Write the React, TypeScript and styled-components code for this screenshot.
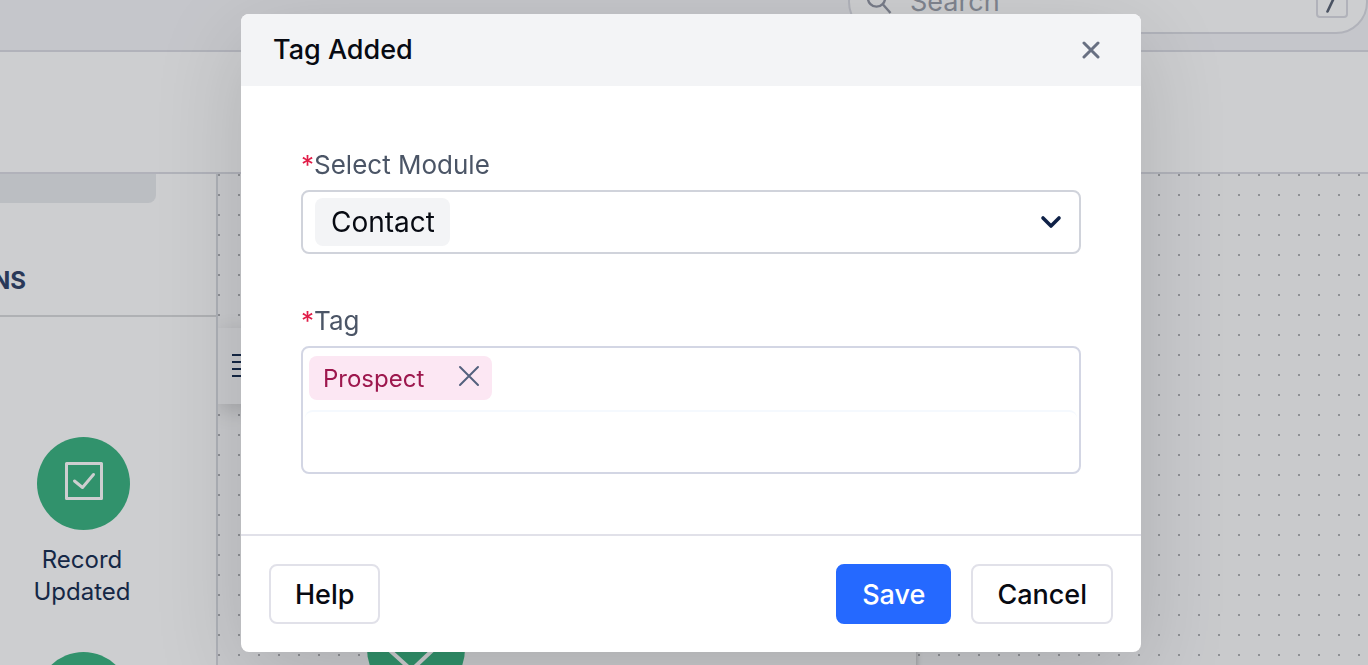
import React, { useState } from "react";
import styled, { createGlobalStyle } from "styled-components";

const GlobalStyle = createGlobalStyle`
  *, *::before, *::after { box-sizing: border-box; }
  body {
    margin: 0;
    overflow: hidden;
    font-family: Inter, "Liberation Sans", sans-serif;
    color: #1a3053;
    background: #ffffff;
  }
  button, input, select { font: inherit; color: inherit; }
`;

const Page = styled.div`
  height: 100vh;
  display: flex;
  flex-direction: column;
  overflow: hidden;
`;

const TopBar = styled.header`
  flex: none;
  height: 52px;
  display: flex;
  align-items: flex-end;
  justify-content: flex-end;
  padding-bottom: 16px;
  background: #f6f6f9;
  border-bottom: 2px solid #dcdde4;
`;

const SearchBox = styled.label`
  flex: none;
  width: 520px;
  height: 64px;
  display: flex;
  align-items: center;
  gap: 18px;
  padding: 0 18px 0 16px;
  border: 2px solid #dcdde4;
  border-radius: 32px;
  background: #ffffff;
`;

const SearchInput = styled.input`
  flex: 1;
  min-width: 0;
  padding: 0;
  border: 0;
  outline: 0;
  background: none;
  font-size: 27px;
  line-height: 32px;
  &::placeholder { color: #9ea3ae; opacity: 1; }
`;

const KeyHint = styled.kbd`
  width: 32px;
  height: 32px;
  display: grid;
  place-items: center;
  border: 2px solid #dcdde4;
  border-radius: 4px;
`;

const SubBar = styled.div`
  flex: none;
  height: 122px;
  border-bottom: 2px solid #dcdde4;
`;

const Workspace = styled.div`
  flex: 1;
  min-height: 0;
  display: flex;
`;

const Sidebar = styled.aside`
  flex: none;
  width: 218px;
  overflow: hidden;
  border-right: 2px solid #dadce2;
`;

const TabStub = styled.div`
  width: 156px;
  height: 29px;
  border-radius: 0 0 8px 0;
  background: #e9ebee;
`;

const SectionTitle = styled.h2`
  height: 114px;
  margin: 0;
  padding-top: 62px;
  border-bottom: 2px solid #dadbdc;
  font-size: 24px;
  line-height: 32px;
  font-weight: 700;
  color: #33456b;
`;

const ClippedWord = styled.span`
  display: flex;
  justify-content: flex-end;
  width: 26px;
  overflow: hidden;
`;

const TriggerList = styled.div`
  display: flex;
  flex-direction: column;
  gap: 44px;
  width: 164px;
  padding-top: 120px;
`;

const Trigger = styled.div`
  display: flex;
  flex-direction: column;
  align-items: center;
  gap: 14px;
  text-align: center;
  font-size: 24px;
  line-height: 32px;
`;

const TriggerIcon = styled.span`
  width: 93px;
  height: 93px;
  margin-left: 2px;
  display: grid;
  place-items: center;
  padding: 0 0 6px 2px;
  border-radius: 50%;
  background: #3db582;
`;

const Canvas = styled.main`
  position: relative;
  flex: 1;
  overflow: hidden;
  background:
    linear-gradient(90deg, transparent 2px, #fafafb 2px) 0 0 / 20px 20px,
    linear-gradient(#b2b3b6 2px, #fafafb 2px) 0 0 / 20px 20px;
`;

const CanvasMenu = styled.button`
  position: absolute;
  left: 0;
  top: 154px;
  width: 76px;
  height: 76px;
  padding: 0 0 0 14px;
  border: 0;
  background: #fafafb;
  box-shadow: 0 6px 20px rgba(0, 0, 0, 0.16);
`;

const NodeCard = styled.div`
  position: absolute;
  left: 198px;
  top: 430px;
  width: 500px;
  height: 140px;
  background: #fafafa;
  box-shadow: 0 0 6px rgba(0, 0, 0, 0.3);
`;

const NodeBadge = styled.span`
  position: absolute;
  left: -49px;
  top: -4px;
  width: 98px;
  height: 98px;
  border-radius: 50%;
  background: #3db582;
`;

const Backdrop = styled.div`
  position: fixed;
  inset: 0;
  display: flex;
  justify-content: center;
  align-items: flex-start;
  padding: 14px 0 0 14px;
  background: rgba(5, 10, 20, 0.2);
`;

const Dialog = styled.form`
  width: 900px;
  max-width: 100%;
  overflow: hidden;
  border-radius: 8px;
  background: #ffffff;
  color: #070a12;
  box-shadow: 0 24px 90px rgba(0, 0, 0, 0.14);
`;

const DialogHeader = styled.div`
  height: 72px;
  display: flex;
  align-items: center;
  justify-content: space-between;
  padding: 0 36px 0 32px;
  background: #f3f4f6;
`;

const DialogTitle = styled.h1`
  margin: 0;
  font-size: 27px;
  line-height: 36px;
  font-weight: 500;
`;

const IconButton = styled.button`
  display: grid;
  place-items: center;
  padding: 0;
  border: 0;
  background: none;
  cursor: pointer;
`;

const CloseButton = styled(IconButton)`
  width: 28px;
  height: 28px;
`;

const DialogBody = styled.div`
  display: flex;
  flex-direction: column;
  gap: 48px;
  padding: 60px;
`;

const Field = styled.div`
  display: flex;
  flex-direction: column;
  gap: 6px;
`;

const FieldLabel = styled.label`
  font-size: 26px;
  line-height: 38px;
  color: #4b5566;
`;

const Required = styled.span`
  color: #e11d48;
`;

const SelectFrame = styled.div`
  height: 64px;
  display: flex;
  align-items: center;
  justify-content: space-between;
  padding: 0 16px 0 12px;
  border: 2px solid #d0d3db;
  border-radius: 8px;
`;

const ModuleSelect = styled.select`
  width: 135px;
  height: 48px;
  padding: 0 16px;
  appearance: none;
  border: 0;
  border-radius: 8px;
  background: #f3f4f6;
  font-size: 28px;
`;

const TagFrame = styled.div`
  display: flex;
  flex-direction: column;
  align-items: flex-start;
  gap: 10px;
  padding: 8px 2px 2px;
  border: 2px solid #d3d6e4;
  border-radius: 8px;
`;

const TagChip = styled.span`
  width: 183px;
  height: 44px;
  display: flex;
  align-items: center;
  justify-content: space-between;
  margin-left: 4px;
  padding: 0 12px 0 14px;
  border-radius: 8px;
  background: #fce7f3;
  color: #9d174d;
  font-size: 24px;
`;

const RemoveButton = styled(IconButton)`
  padding-bottom: 4px;
`;

const TagInput = styled.input`
  width: 100%;
  height: 60px;
  padding: 0 12px;
  border: 0;
  border-top: 2px solid #f5f9fe;
  border-radius: 8px;
  outline: 0;
  background: #ffffff;
  font-size: 26px;
`;

const DialogFooter = styled.div`
  display: flex;
  gap: 20px;
  padding: 28px;
  border-top: 2px solid #e1e1e9;
`;

const Button = styled.button<{ $primary?: boolean; $start?: boolean }>`
  height: 60px;
  padding: 0 24px;
  margin-right: ${(p) => (p.$start ? "auto" : "0")};
  border: 2px solid ${(p) => (p.$primary ? "#2569ff" : "#e1e1e9")};
  border-radius: 8px;
  background: ${(p) => (p.$primary ? "#2569ff" : "#ffffff")};
  color: ${(p) => (p.$primary ? "#ffffff" : "#070a12")};
  font-size: 27px;
  font-weight: 500;
  cursor: pointer;
`;

function Cross({ size, color, width }: { size: number; color: string; width: number }) {
  return (
    <svg width={size} height={size} viewBox={`0 0 ${size} ${size}`} fill="none" stroke={color} strokeWidth={width} strokeLinecap="round">
      <path d={`M2 2 L${size - 2} ${size - 2} M${size - 2} 2 L2 ${size - 2}`} />
    </svg>
  );
}

function CheckSquare() {
  return (
    <svg width="38" height="38" viewBox="0 0 38 38" fill="none" stroke="#fff" strokeWidth="3" strokeLinecap="round" strokeLinejoin="round">
      <rect x="1.5" y="1.5" width="35" height="35" />
      <path d="M9.5 19 L17.5 25.5 L28.5 12.5" />
    </svg>
  );
}

export default function App() {
  const [module, setModule] = useState("Contact");
  const [tags, setTags] = useState(["Prospect"]);

  return (
    <>
      <GlobalStyle />
      <Page>
        <TopBar>
          <SearchBox>
            <svg width="26" height="28" viewBox="0 0 26 28" fill="none" stroke="#9599a6" strokeWidth="2.4">
              <circle cx="10.5" cy="10" r="8.6" />
              <path d="M17 16.5 L24.5 25" />
            </svg>
            <SearchInput placeholder="Search" aria-label="Search" />
            <KeyHint>
              <svg width="14" height="24" viewBox="0 0 14 24" fill="none" stroke="#5d6677" strokeWidth="2.6" strokeLinecap="round">
                <path d="M2.5 21.5 L11.5 2.5" />
              </svg>
            </KeyHint>
          </SearchBox>
        </TopBar>
        <SubBar />
        <Workspace>
          <Sidebar>
            <TabStub />
            <SectionTitle>
              <ClippedWord>NS</ClippedWord>
            </SectionTitle>
            <TriggerList>
              <Trigger>
                <TriggerIcon><CheckSquare /></TriggerIcon>
                <span>Record<br />Updated</span>
              </Trigger>
              <Trigger>
                <TriggerIcon />
              </Trigger>
            </TriggerList>
          </Sidebar>
          <Canvas>
            <CanvasMenu type="button" aria-label="Menu">
              <svg width="30" height="26" viewBox="0 0 30 26" stroke="#1a3053" strokeWidth="2" display="block">
                <path d="M0 2 H30 M0 9 H30 M0 16 H30 M0 23 H30" />
              </svg>
            </CanvasMenu>
            <NodeCard>
              <NodeBadge>
                <svg width="98" height="98" viewBox="0 0 98 98" fill="none" stroke="#fff" strokeWidth="4">
                  <path d="M18 46 L44.5 70 L70 46" />
                </svg>
              </NodeBadge>
            </NodeCard>
          </Canvas>
        </Workspace>
      </Page>
      <Backdrop>
        <Dialog role="dialog" aria-labelledby="dialog-title" onSubmit={(e) => e.preventDefault()}>
          <DialogHeader>
            <DialogTitle id="dialog-title">Tag Added</DialogTitle>
            <CloseButton type="button" aria-label="Close">
              <Cross size={18} color="#687082" width={3} />
            </CloseButton>
          </DialogHeader>
          <DialogBody>
            <Field>
              <FieldLabel htmlFor="module"><Required>*</Required>Select Module</FieldLabel>
              <SelectFrame>
                <ModuleSelect id="module" value={module} onChange={(e) => setModule(e.target.value)}>
                  <option>Contact</option>
                </ModuleSelect>
                <svg width="24" height="24" viewBox="0 0 24 24" fill="none" stroke="#0f2147" strokeWidth="3.6" strokeLinecap="round" strokeLinejoin="round">
                  <path d="M4 8 L12 16 L20 8" />
                </svg>
              </SelectFrame>
            </Field>
            <Field>
              <FieldLabel htmlFor="tag"><Required>*</Required>Tag</FieldLabel>
              <TagFrame>
                {tags.map((tag) => (
                  <TagChip key={tag}>
                    {tag}
                    <RemoveButton type="button" aria-label={`Remove ${tag}`} onClick={() => setTags(tags.filter((t) => t !== tag))}>
                      <Cross size={22} color="#53617d" width={2} />
                    </RemoveButton>
                  </TagChip>
                ))}
                <TagInput id="tag" />
              </TagFrame>
            </Field>
          </DialogBody>
          <DialogFooter>
            <Button type="button" $start>Help</Button>
            <Button type="submit" $primary>Save</Button>
            <Button type="button">Cancel</Button>
          </DialogFooter>
        </Dialog>
      </Backdrop>
    </>
  );
}
